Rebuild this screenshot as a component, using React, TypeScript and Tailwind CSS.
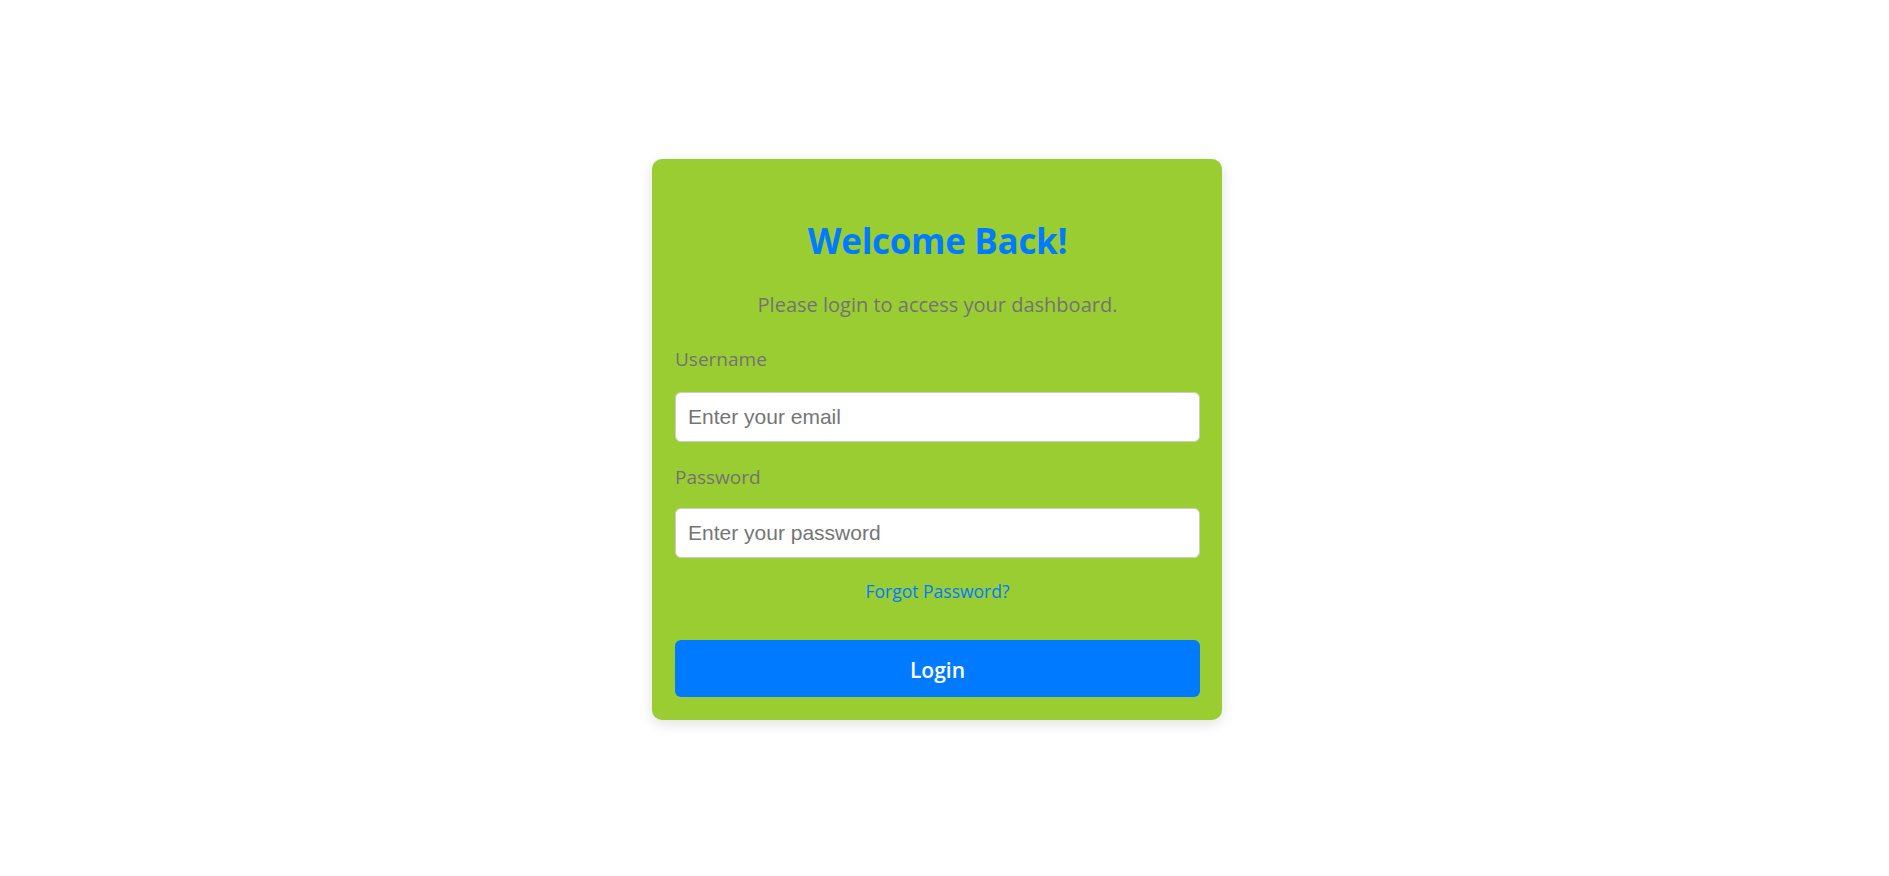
import React, { useState } from 'react';

const App: React.FC = () => {
  const [email, setEmail] = useState('');
  const [password, setPassword] = useState('');

  return (
    <div className="min-h-screen w-full bg-white flex items-center justify-center pr-[15px] pt-[3px] font-['Open_Sans',sans-serif]">
      {/* Login card */}
      <div className="w-[570px] bg-[#9acd32] rounded-[10px] pl-[23px] pr-[22px] pt-[59px] pb-[23px] shadow-[0_4px_14px_rgba(0,0,0,0.12)] flex flex-col">
        <h2 className="h-[44px] pt-[3px] flex items-center justify-center text-[35px] font-bold text-[#007bff] tracking-[-0.3px]">
          Welcome Back!
        </h2>
        <p className="mt-[31px] h-[24px] flex items-center justify-center text-[20px] text-[#737373]">
          Please login to access your dashboard.
        </p>

        <label className="mt-[30px] h-[24px] flex items-center text-[19px] text-[#737373]">Username</label>
        <input
          type="email"
          placeholder="Enter your email"
          value={email}
          onChange={(e) => setEmail(e.target.value)}
          className="mt-[21px] h-[50px] w-full rounded-[6px] border border-[#cccccc] bg-white px-[12px] text-[21px] font-['Liberation_Sans',Arial,sans-serif] text-[#333] placeholder:text-[#757575] outline-none"
        />

        <label className="mt-[23px] h-[24px] flex items-center text-[19px] text-[#737373]">Password</label>
        <input
          type="password"
          placeholder="Enter your password"
          value={password}
          onChange={(e) => setPassword(e.target.value)}
          className="mt-[19px] h-[50px] w-full rounded-[6px] border border-[#cccccc] bg-white px-[12px] text-[21px] font-['Liberation_Sans',Arial,sans-serif] text-[#333] placeholder:text-[#757575] outline-none"
        />

        <a href="#" className="mt-[21px] h-[24px] flex items-center justify-center text-[17.5px] text-[#007bff]">
          Forgot Password?
        </a>

        <button className="mt-[37px] h-[57px] pt-[5px] w-full rounded-[6px] bg-[#007bff] text-white text-[21px] font-semibold">
          Login
        </button>
      </div>
    </div>
  );
};

export default App;
